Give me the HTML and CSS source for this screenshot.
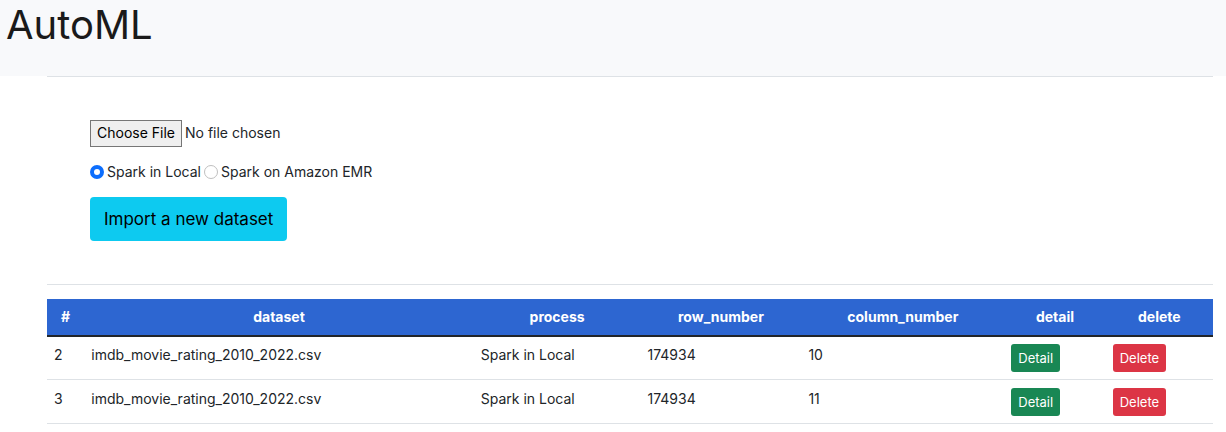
FILE: index.html
```html
<!DOCTYPE html>
<html lang="en">
<head>
<meta charset="utf-8">
<meta name="viewport" content="width=device-width, initial-scale=1">
<title>AutoML</title>
<link rel="stylesheet" href="styles.css">
</head>
<body>
<header class="banner"><h1 class="title">AutoML</h1></header>
<main class="content">
  <form class="import-form">
    <input class="file" type="file" aria-label="Dataset file">
    <div class="options">
      <input class="radio" type="radio" name="process" id="local" checked>
      <label for="local">Spark in Local</label>
      <input class="radio" type="radio" name="process" id="emr">
      <label for="emr">Spark on Amazon EMR</label>
    </div>
    <button class="button button-import" type="button">Import a new dataset</button>
  </form>
  <table class="datasets">
    <colgroup>
      <col class="col-id"><col class="col-dataset"><col class="col-process"><col class="col-rows"><col class="col-columns"><col class="col-detail"><col class="col-delete">
    </colgroup>
    <thead>
      <tr><th>#</th><th>dataset</th><th>process</th><th>row_number</th><th>column_number</th><th>detail</th><th>delete</th></tr>
    </thead>
    <tbody>
      <tr>
        <td>2</td><td>imdb_movie_rating_2010_2022.csv</td><td>Spark in Local</td><td>174934</td><td>10</td>
        <td><button class="button button-detail" type="button">Detail</button></td>
        <td><button class="button button-delete" type="button">Delete</button></td>
      </tr>
      <tr>
        <td>3</td><td>imdb_movie_rating_2010_2022.csv</td><td>Spark in Local</td><td>174934</td><td>11</td>
        <td><button class="button button-detail" type="button">Detail</button></td>
        <td><button class="button button-delete" type="button">Delete</button></td>
      </tr>
    </tbody>
  </table>
</main>
</body>
</html>
```
FILE: styles.css
```css
* { box-sizing: border-box; }

body {
  margin: 0;
  background: #fff;
  color: #212529;
  font: 14px/22px Inter, "Liberation Sans", sans-serif;
}

.banner {
  background: #f8f9fb;
  padding: 0 6px 26px;
}

.title {
  margin: 0;
  color: #1a1a1a;
  font-size: 40px;
  font-weight: 400;
  line-height: 50px;
}

.content { margin: 0 13px 0 47px; }

.import-form {
  display: flex;
  flex-direction: column;
  align-items: flex-start;
  gap: 14px;
  padding: 43px;
  border-top: 1px solid #dee2e6;
  border-bottom: 1px solid #dee2e6;
}

.file {
  color: #212529;
  font: inherit;
}

.file::file-selector-button {
  margin: 0 3px 0 0;
  padding: 1px 6px 2px;
  border: 1px solid #767676;
  border-radius: 0;
  background: #efefef;
  color: #000;
  font: inherit;
}

.options {
  display: flex;
  align-items: center;
  gap: 3px;
}

.radio {
  appearance: none;
  width: 14px;
  height: 14px;
  margin: 0;
  border: 1px solid #bfbfbf;
  border-radius: 50%;
  background: #fff;
}

.radio:checked {
  border: 4px solid #0d6efd;
}

.button {
  display: block;
  border: 0;
  border-radius: 3px;
  color: #fff;
  font: 13px/18px Inter, "Liberation Sans", sans-serif;
  padding: 5px 7px;
}

.button-import {
  padding: 9px 14px;
  border-radius: 4px;
  background: #0dcaf0;
  color: #000;
  font-size: 17px;
  line-height: 26px;
}

.button-detail { background: #198754; }
.button-delete { background: #dc3545; }

.datasets {
  width: 100%;
  margin: 14px 0;
  border-collapse: separate;
  border-spacing: 0;
  table-layout: fixed;
}

.col-id { width: 3.2%; }
.col-dataset { width: 33.4%; }
.col-process { width: 14.3%; }
.col-rows { width: 13.8%; }
.col-columns { width: 17.4%; }
.col-detail { width: 8.7%; }
.col-delete { width: 9.2%; }

.datasets th {
  padding: 7px;
  border-bottom: 2px solid #212529;
  background: #2d66d1;
  color: #fff;
  font-weight: 700;
  text-align: center;
}

.datasets td {
  padding: 7px;
  border-bottom: 1px solid #dee2e6;
  vertical-align: top;
}

.datasets tr + tr td { padding-top: 8px; }
```
